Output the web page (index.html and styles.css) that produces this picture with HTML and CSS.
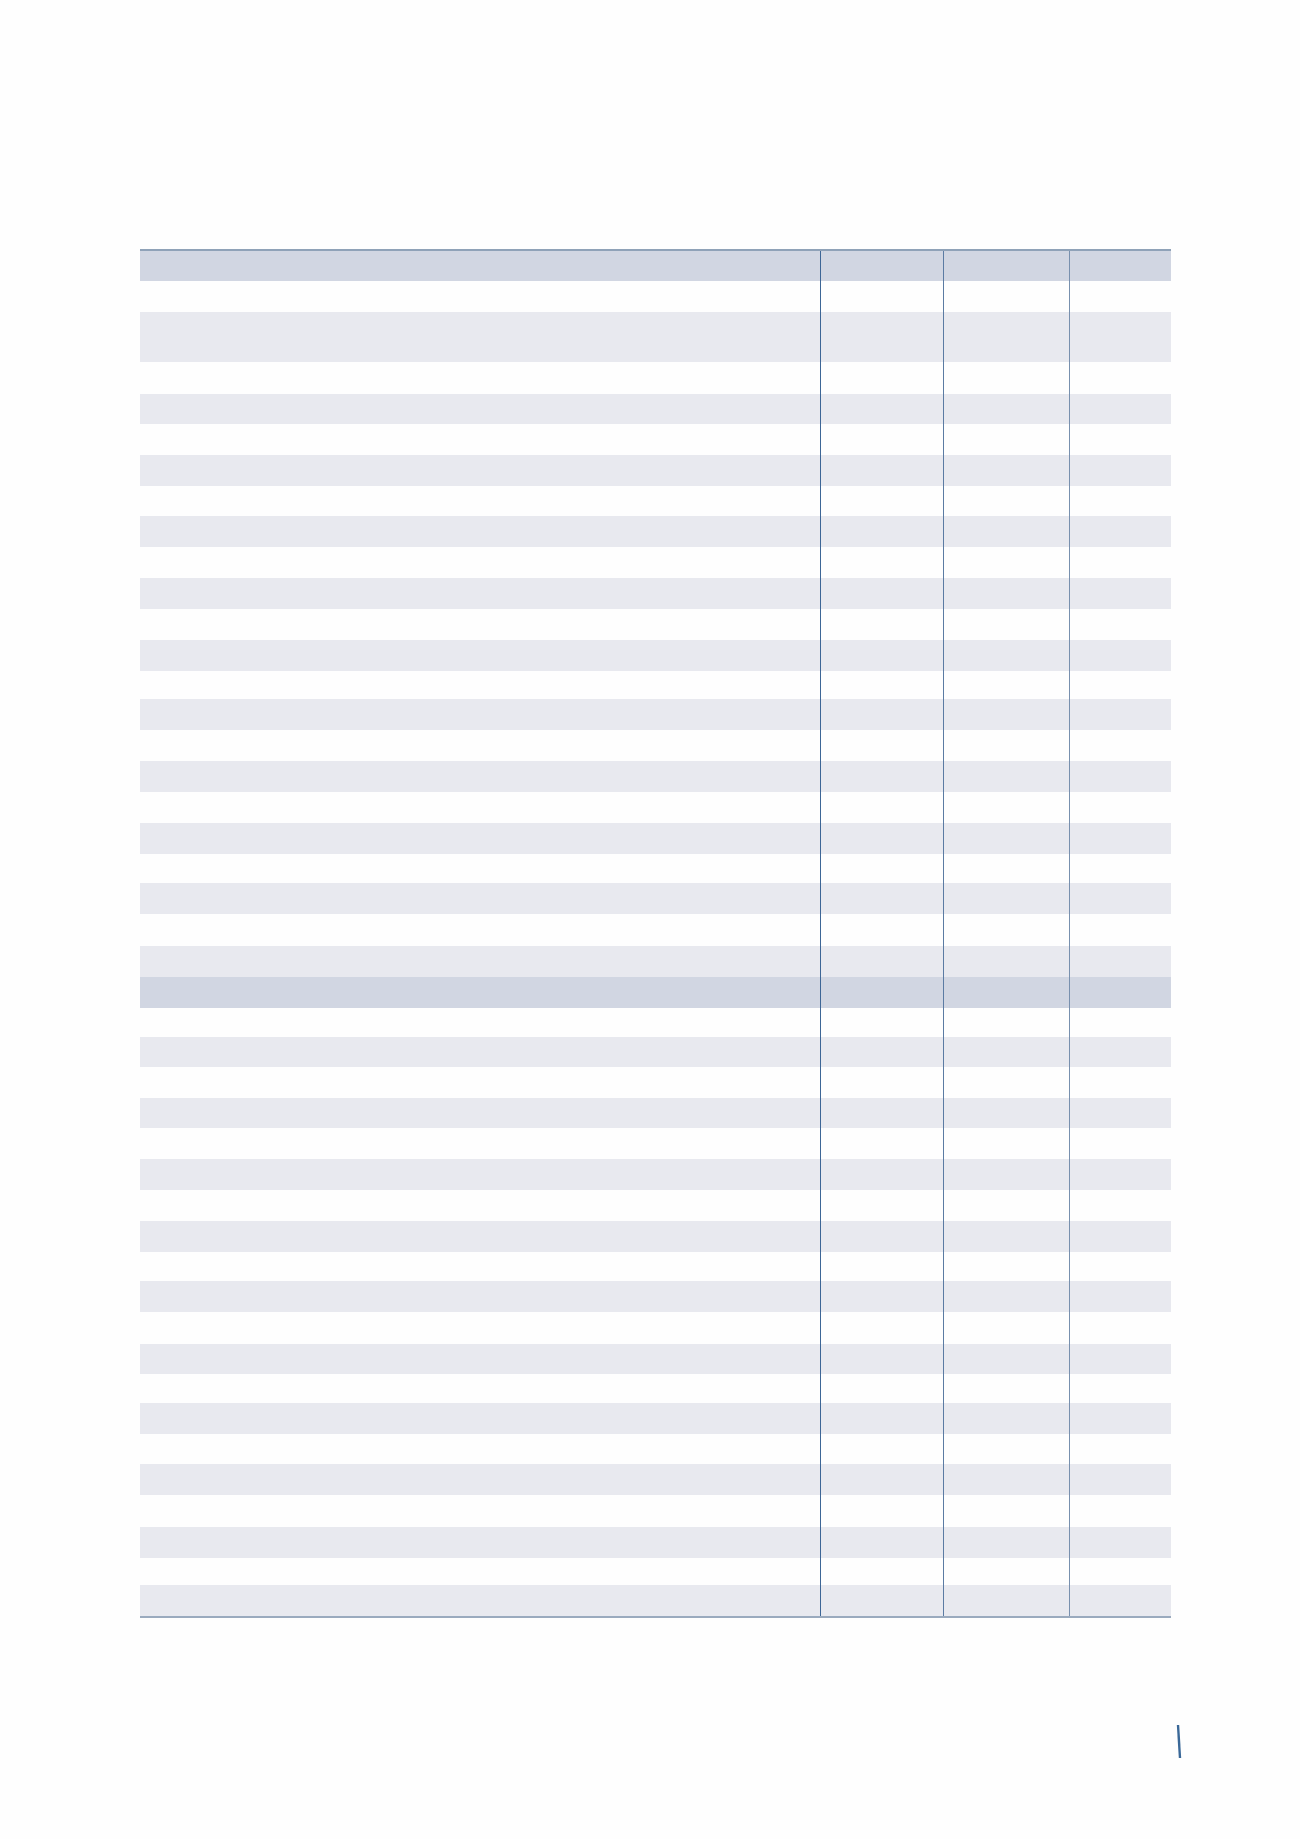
FILE: index.html
```html
<!DOCTYPE html>
<html lang="en">
<head>
<meta charset="utf-8">
<title>Table</title>
<link rel="stylesheet" href="styles.css">
</head>
<body>
<div class="page">
  <div class="tbl">
    <div class="row hd h30"><div class="c c1"></div><div class="c c2"></div><div class="c c3"></div><div class="c c4"></div></div>
    <div class="row h31"><div class="c c1"></div><div class="c c2"></div><div class="c c3"></div><div class="c c4"></div></div>
    <div class="row g h50"><div class="c c1"></div><div class="c c2"></div><div class="c c3"></div><div class="c c4"></div></div>
    <div class="row h32"><div class="c c1"></div><div class="c c2"></div><div class="c c3"></div><div class="c c4"></div></div>
    <div class="row g h30"><div class="c c1"></div><div class="c c2"></div><div class="c c3"></div><div class="c c4"></div></div>
    <div class="row h31"><div class="c c1"></div><div class="c c2"></div><div class="c c3"></div><div class="c c4"></div></div>
    <div class="row g h31"><div class="c c1"></div><div class="c c2"></div><div class="c c3"></div><div class="c c4"></div></div>
    <div class="row h30"><div class="c c1"></div><div class="c c2"></div><div class="c c3"></div><div class="c c4"></div></div>
    <div class="row g h31"><div class="c c1"></div><div class="c c2"></div><div class="c c3"></div><div class="c c4"></div></div>
    <div class="row h31"><div class="c c1"></div><div class="c c2"></div><div class="c c3"></div><div class="c c4"></div></div>
    <div class="row g h31"><div class="c c1"></div><div class="c c2"></div><div class="c c3"></div><div class="c c4"></div></div>
    <div class="row h31"><div class="c c1"></div><div class="c c2"></div><div class="c c3"></div><div class="c c4"></div></div>
    <div class="row g h31"><div class="c c1"></div><div class="c c2"></div><div class="c c3"></div><div class="c c4"></div></div>
    <div class="row h28"><div class="c c1"></div><div class="c c2"></div><div class="c c3"></div><div class="c c4"></div></div>
    <div class="row g h31"><div class="c c1"></div><div class="c c2"></div><div class="c c3"></div><div class="c c4"></div></div>
    <div class="row h31"><div class="c c1"></div><div class="c c2"></div><div class="c c3"></div><div class="c c4"></div></div>
    <div class="row g h31"><div class="c c1"></div><div class="c c2"></div><div class="c c3"></div><div class="c c4"></div></div>
    <div class="row h31"><div class="c c1"></div><div class="c c2"></div><div class="c c3"></div><div class="c c4"></div></div>
    <div class="row g h31"><div class="c c1"></div><div class="c c2"></div><div class="c c3"></div><div class="c c4"></div></div>
    <div class="row h29"><div class="c c1"></div><div class="c c2"></div><div class="c c3"></div><div class="c c4"></div></div>
    <div class="row g h31"><div class="c c1"></div><div class="c c2"></div><div class="c c3"></div><div class="c c4"></div></div>
    <div class="row h32"><div class="c c1"></div><div class="c c2"></div><div class="c c3"></div><div class="c c4"></div></div>
    <div class="row g h31"><div class="c c1"></div><div class="c c2"></div><div class="c c3"></div><div class="c c4"></div></div>
    <div class="row hd h31"><div class="c c1"></div><div class="c c2"></div><div class="c c3"></div><div class="c c4"></div></div>
    <div class="row h29"><div class="c c1"></div><div class="c c2"></div><div class="c c3"></div><div class="c c4"></div></div>
    <div class="row g h30"><div class="c c1"></div><div class="c c2"></div><div class="c c3"></div><div class="c c4"></div></div>
    <div class="row h31"><div class="c c1"></div><div class="c c2"></div><div class="c c3"></div><div class="c c4"></div></div>
    <div class="row g h30"><div class="c c1"></div><div class="c c2"></div><div class="c c3"></div><div class="c c4"></div></div>
    <div class="row h31"><div class="c c1"></div><div class="c c2"></div><div class="c c3"></div><div class="c c4"></div></div>
    <div class="row g h31"><div class="c c1"></div><div class="c c2"></div><div class="c c3"></div><div class="c c4"></div></div>
    <div class="row h31"><div class="c c1"></div><div class="c c2"></div><div class="c c3"></div><div class="c c4"></div></div>
    <div class="row g h31"><div class="c c1"></div><div class="c c2"></div><div class="c c3"></div><div class="c c4"></div></div>
    <div class="row h29"><div class="c c1"></div><div class="c c2"></div><div class="c c3"></div><div class="c c4"></div></div>
    <div class="row g h31"><div class="c c1"></div><div class="c c2"></div><div class="c c3"></div><div class="c c4"></div></div>
    <div class="row h32"><div class="c c1"></div><div class="c c2"></div><div class="c c3"></div><div class="c c4"></div></div>
    <div class="row g h30"><div class="c c1"></div><div class="c c2"></div><div class="c c3"></div><div class="c c4"></div></div>
    <div class="row h29"><div class="c c1"></div><div class="c c2"></div><div class="c c3"></div><div class="c c4"></div></div>
    <div class="row g h31"><div class="c c1"></div><div class="c c2"></div><div class="c c3"></div><div class="c c4"></div></div>
    <div class="row h30"><div class="c c1"></div><div class="c c2"></div><div class="c c3"></div><div class="c c4"></div></div>
    <div class="row g h31"><div class="c c1"></div><div class="c c2"></div><div class="c c3"></div><div class="c c4"></div></div>
    <div class="row h32"><div class="c c1"></div><div class="c c2"></div><div class="c c3"></div><div class="c c4"></div></div>
    <div class="row g h31"><div class="c c1"></div><div class="c c2"></div><div class="c c3"></div><div class="c c4"></div></div>
    <div class="row h27"><div class="c c1"></div><div class="c c2"></div><div class="c c3"></div><div class="c c4"></div></div>
    <div class="row g h31"><div class="c c1"></div><div class="c c2"></div><div class="c c3"></div><div class="c c4"></div></div>
  </div>
  <div class="footer">
    <svg class="pagemark" width="8" height="36" viewBox="0 0 8 36" aria-hidden="true">
      <line x1="3" y1="1" x2="5" y2="34" stroke="#3a6898" stroke-width="2.4" stroke-linecap="butt"/>
    </svg>
  </div>
</div>
</body>
</html>
```

FILE: styles.css
```css
html, body {
  margin: 0;
  padding: 0;
  background: #fefefe;
  font-family: "Liberation Sans", Arial, sans-serif;
}

.page {
  width: 1300px;
  height: 1839px;
  box-sizing: border-box;
  padding: 249px 0 0 140px;
}

.tbl {
  width: 1031px;
  border-top: 2px solid #8fa2b8;
  border-bottom: 2px solid #9aaabe;
}

.row {
  display: grid;
  grid-template-columns: 680px 123px 126px 102px;
  background: #fefefe;
}

.row.g {
  background: #e8e9ef;
}

.row.hd {
  background: #d1d6e2;
}

.c {
  box-sizing: border-box;
  height: 100%;
}

.c2 { border-left: 1px solid #3d6696; }
.c3 { border-left: 1px solid #5b7ba3; }
.c4 { border-left: 1px solid #7890ae; }

.h27 { height: 27px; }
.h28 { height: 28px; }
.h29 { height: 29px; }
.h30 { height: 30px; }
.h31 { height: 31px; }
.h32 { height: 32px; }
.h50 { height: 50px; }

.footer {
  display: flex;
  width: 1043px;
  justify-content: flex-end;
  margin-top: 106px;
}

.pagemark {
  display: block;
}
```
